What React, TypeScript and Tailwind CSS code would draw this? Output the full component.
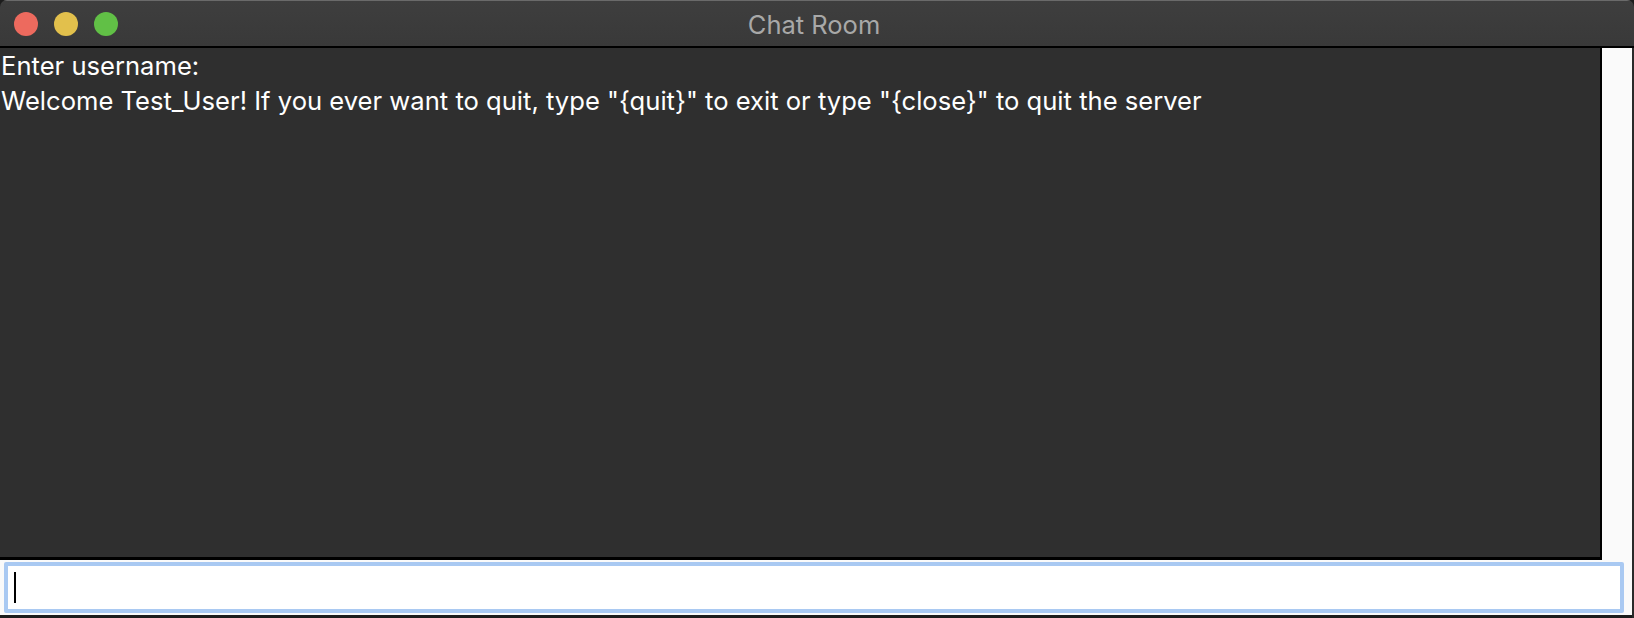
import React from "react";

export default function App() {
  return (
    <div className="w-[1634px] h-[618px] bg-[#1c1c1c] overflow-hidden" style={{ fontFamily: "Inter, 'Liberation Sans', sans-serif" }}>
      <div className="w-[1634px] h-[618px] flex flex-col rounded-t-[7px] overflow-hidden">
        {/* Title bar */}
        <div className="relative h-[48px] shrink-0 bg-gradient-to-b from-[#3e3e3e] to-[#393939] border-t border-[#6a6a6a] border-b-2 border-b-black flex items-center">
          <div className="flex items-center gap-[16px] pl-[14px] pt-[1px]">
            <div className="w-[24px] h-[24px] rounded-full bg-[#ed6a5e]" />
            <div className="w-[24px] h-[24px] rounded-full bg-[#e2c04c]" />
            <div className="w-[24px] h-[24px] rounded-full bg-[#61c046]" />
          </div>
          <div className="absolute inset-0 flex items-center justify-center text-[25.5px] text-[#a8a8a8] pr-[6px] pt-[4px]">
            Chat Room
          </div>
        </div>
        {/* Body */}
        <div className="flex-1 flex flex-col bg-[#fafafa] border-r-2 border-r-[#2a2a2a]">
          <div className="flex h-[512px]">
            <div className="w-[1602px] h-[512px] bg-[#2f2f2f] border-r-2 border-b-[3px] border-black text-white text-[25.6px] leading-[35px] pl-[1px]">
              <div>Enter username:</div>
              <div>Welcome Test_User! If you ever want to quit, type "{"{quit}"}" to exit or type "{"{close}"}" to quit the server</div>
            </div>
            <div className="flex-1" />
          </div>
          <div className="flex-1 pt-[2px] pl-[4px] pr-[6px] pb-[2px] border-b-[3px] border-b-[#1c1c1c]">
            <div className="h-[51px] w-[1620px] rounded-[2px] border-[4px] border-[#a9c9f2] bg-white flex items-center pl-[6px]">
              <div className="w-[2px] h-[31px] bg-black" />
            </div>
          </div>
        </div>
      </div>
    </div>
  );
}
